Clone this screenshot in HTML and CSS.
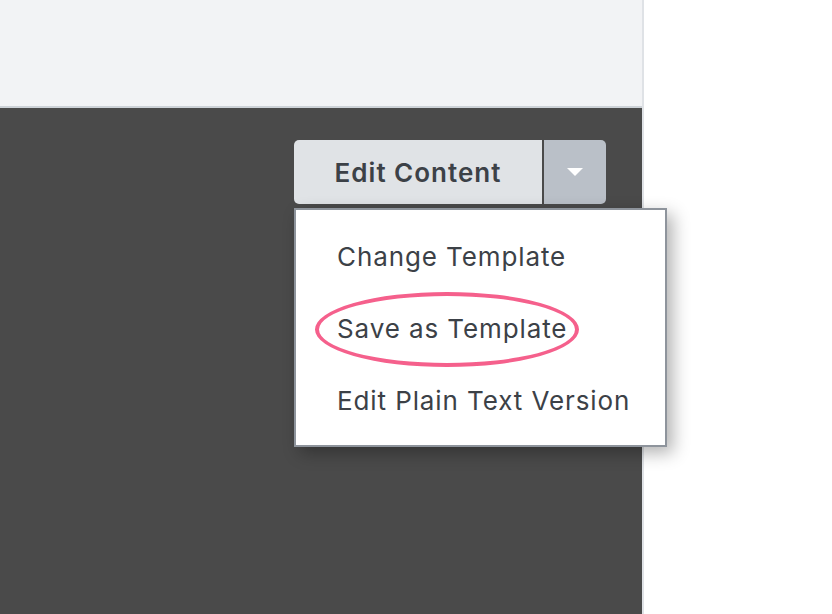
FILE: index.html
```html
<!DOCTYPE html>
<html lang="en">

<head>
     <meta charset="UTF-8">
     <meta name="viewport" content="width=device-width, initial-scale=1.0">
     <title>Edit Content</title>
     <link rel="stylesheet" href="styles.css">
</head>

<body>
     <div id="wrapper">
          <div class="editor">
               <div class="editor-top"></div>
               <div class="editor-canvas">
                    <div class="btn-group">
                         <button class="btn-main">Edit Content</button>
                         <button class="btn-toggle"><span class="caret"></span></button>
                         <ul class="menu">
                              <li>Change Template</li>
                              <li class="marked">Save as Template<span class="circle"></span></li>
                              <li>Edit Plain Text Version</li>
                         </ul>
                    </div>
               </div>
          </div>
          <div class="side"></div>
     </div>
</body>

</html>
```

FILE: styles.css
```css
* {
     padding: 0;
     margin: 0;
     box-sizing: border-box;
     font-family: 'Inter', 'Open Sans', sans-serif;
}

html,
body {
     width: 100%;
     height: 100%;
     overflow: hidden;
}

#wrapper {
     display: flex;
     height: 100%;
}

.editor {
     width: 644px;
     display: flex;
     flex-direction: column;
     border-right: 2px solid #dfe2e6;
}

.editor-top {
     height: 108px;
     background: #f2f3f5;
     border-bottom: 2px solid #cdd2d7;
}

.editor-canvas {
     flex: 1;
     background: #4a4a4a;
     display: flex;
     justify-content: flex-end;
     align-items: flex-start;
     padding: 32px 36px 0 0;
}

.side {
     flex: 1;
     background: white;
}

.btn-group {
     position: relative;
     display: flex;
     gap: 2px;
}

.btn-group button {
     height: 64px;
     border: none;
     color: #3c4147;
}

.btn-main {
     width: 248px;
     background: #e0e3e6;
     border-radius: 5px 0 0 5px;
     font-size: 26px;
     font-weight: 600;
     letter-spacing: 1px;
}

.btn-toggle {
     width: 62px;
     background: #bac0c8;
     border-radius: 0 5px 5px 0;
     display: flex;
     justify-content: center;
     align-items: center;
}

.caret {
     width: 0;
     height: 0;
     border-left: 8px solid transparent;
     border-right: 8px solid transparent;
     border-top: 8px solid white;
}

.menu {
     position: absolute;
     top: 68px;
     left: 0;
     width: 373px;
     list-style: none;
     background: white;
     border: 2px solid #8e949c;
     padding: 11px 0 8px;
     box-shadow: 6px 6px 16px rgba(0, 0, 0, 0.3);
}

.menu li {
     position: relative;
     height: 72px;
     line-height: 72px;
     padding-left: 41px;
     font-size: 26px;
     letter-spacing: .9px;
     color: #3c4147;
}

.circle {
     position: absolute;
     left: 19px;
     top: 0;
     width: 264px;
     height: 75px;
     border: 4px solid #f5608c;
     border-radius: 50%;
     margin-top: -1px;
}
```
